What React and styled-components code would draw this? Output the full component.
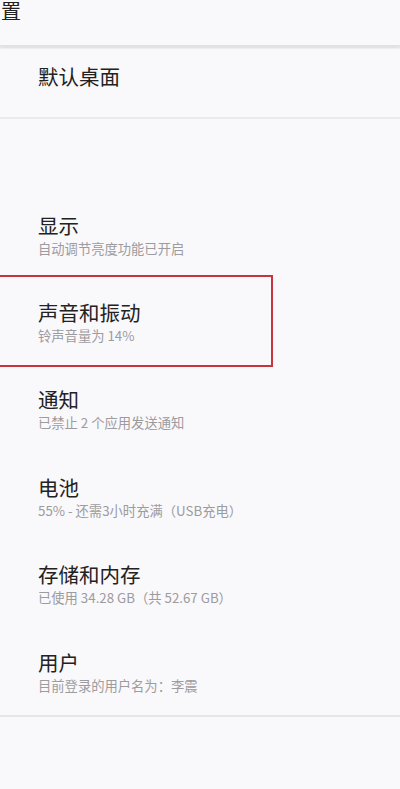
import React from 'react';
import styled, { createGlobalStyle } from 'styled-components';

const GlobalStyle = createGlobalStyle`
  html, body {
    margin: 0;
    padding: 0;
    background: #f9f8fb;
  }
  body {
    font-family: "Noto Sans CJK SC", "Noto Sans", Roboto, sans-serif;
    overflow: hidden;
  }
`;

const Screen = styled.div`
  width: 400px;
  height: 789px;
  background: #f9f8fb;
  overflow: hidden;
  display: flex;
  flex-direction: column;
`;

const Header = styled.div`
  height: 45px;
  flex-shrink: 0;
  display: flex;
  align-items: flex-start;
  background: #f9f8fb;
  box-shadow: 0 1px 2px rgba(0, 0, 0, 0.12);
  border-bottom: 2px solid #e2e1e4;
  position: relative;
  z-index: 1;
`;

const HeaderTitle = styled.div`
  padding-left: 1px;
  margin-top: 0;
  font-size: 20px;
  line-height: 22px;
  color: #222;
`;

const TopItem = styled.div`
  height: 72px;
  flex-shrink: 0;
  padding: 15px 0 0 38px;
  box-sizing: border-box;
  border-bottom: 2px solid #ebeaed;
  font-size: 20.5px;
  line-height: 28px;
  color: #222;
`;

const Spacer = styled.div`
  height: 72px;
  flex-shrink: 0;
`;

const List = styled.div`
  display: flex;
  flex-direction: column;
  border-bottom: 2px solid #e6e5e8;
`;

const Row = styled.div`
  position: relative;
  height: 87.4px;
  display: flex;
  flex-direction: column;
  justify-content: center;
  padding-left: 38px;
`;

const Title = styled.div`
  font-size: 20.5px;
  line-height: 26px;
  color: #222;
`;

const Subtitle = styled.div`
  font-size: 13.3px;
  line-height: 18px;
  color: #9c9b9e;
  margin-top: 2px;
`;

const Highlight = styled.div`
  position: absolute;
  left: -4px;
  top: -3px;
  width: 277px;
  height: 92px;
  box-sizing: border-box;
  border: 2px solid #c7343f;
  pointer-events: none;
`;

const items = [
  { title: '显示', sub: '自动调节亮度功能已开启' },
  { title: '声音和振动', sub: '铃声音量为 14%', marked: true },
  { title: '通知', sub: '已禁止 2 个应用发送通知' },
  { title: '电池', sub: '55% - 还需3小时充满（USB充电）' },
  { title: '存储和内存', sub: '已使用 34.28 GB（共 52.67 GB）' },
  { title: '用户', sub: '目前登录的用户名为：李震' },
];

export default function App() {
  return (
    <Screen>
      <GlobalStyle />
      <Header>
        <HeaderTitle>置</HeaderTitle>
      </Header>
      <TopItem>默认桌面</TopItem>
      <Spacer />
      <List>
        {items.map((item) => (
          <Row key={item.title}>
            <Title>{item.title}</Title>
            <Subtitle>{item.sub}</Subtitle>
            {item.marked && <Highlight />}
          </Row>
        ))}
      </List>
    </Screen>
  );
}
